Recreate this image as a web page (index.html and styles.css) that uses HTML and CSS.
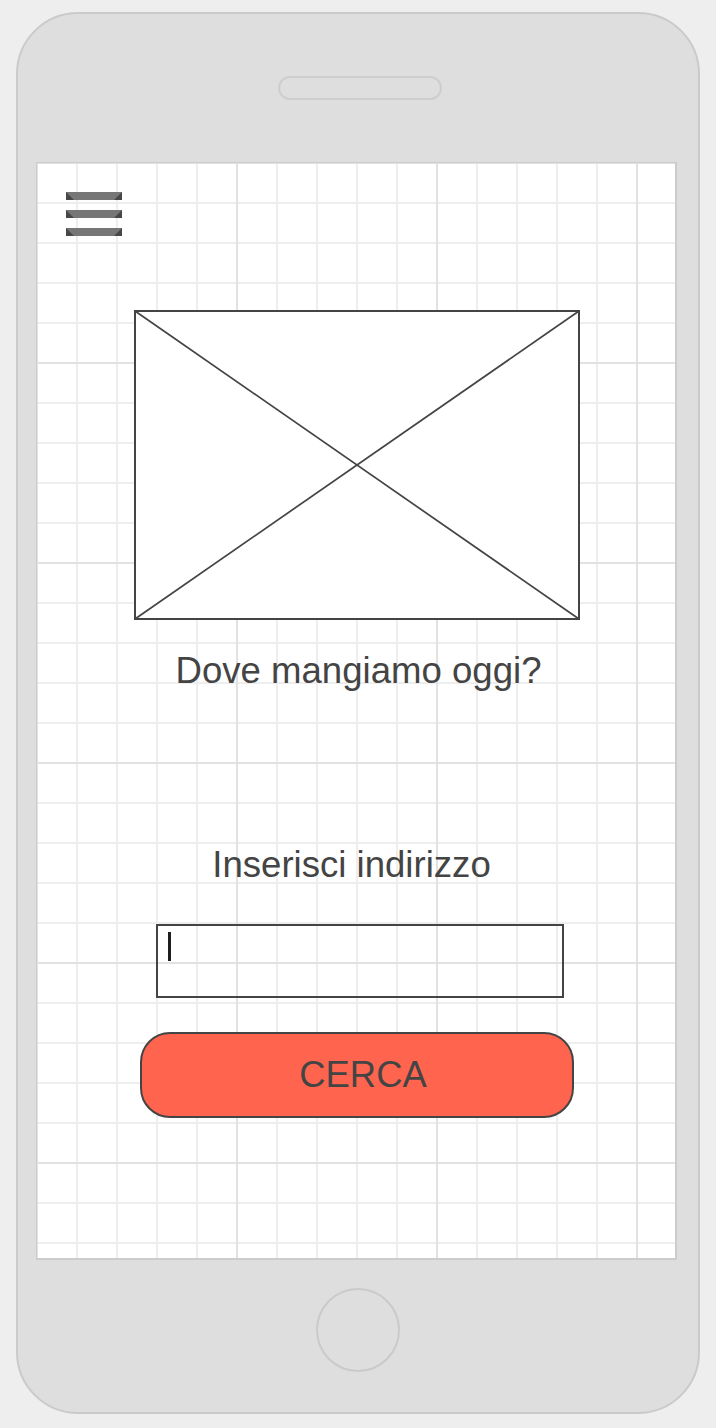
FILE: index.html
```html
<!DOCTYPE html>
<html lang="it">
<head>
<meta charset="utf-8">
<title>Dove mangiamo oggi?</title>
<link rel="stylesheet" href="styles.css">
</head>
<body>
<div class="phone">
  <div class="speaker"></div>
  <div class="screen">
    <svg class="menu" width="56" height="44" viewBox="0 0 56 44">
      <g>
        <rect x="0" y="0" width="56" height="8" fill="#767676"/>
        <polygon points="0,0 0,8 8,8" fill="#474747"/>
        <polygon points="56,0 56,8 48,8" fill="#474747"/>
      </g>
      <g transform="translate(0,18)">
        <rect x="0" y="0" width="56" height="8" fill="#767676"/>
        <polygon points="0,0 0,8 8,8" fill="#474747"/>
        <polygon points="56,0 56,8 48,8" fill="#474747"/>
      </g>
      <g transform="translate(0,36)">
        <rect x="0" y="0" width="56" height="8" fill="#767676"/>
        <polygon points="0,0 0,8 8,8" fill="#474747"/>
        <polygon points="56,0 56,8 48,8" fill="#474747"/>
      </g>
    </svg>
    <svg class="placeholder" width="446" height="310" viewBox="0 0 446 310">
      <rect x="1" y="1" width="444" height="308" fill="#ffffff" stroke="#444444" stroke-width="2"/>
      <line x1="1" y1="1" x2="445" y2="309" stroke="#444444" stroke-width="1.7"/>
      <line x1="1" y1="309" x2="445" y2="1" stroke="#444444" stroke-width="1.7"/>
    </svg>
    <div class="title">Dove mangiamo oggi?</div>
    <div class="label">Inserisci indirizzo</div>
    <div class="field"><span class="caret"></span></div>
    <div class="button">CERCA</div>
  </div>
  <div class="home"></div>
</div>
</body>
</html>
```

FILE: styles.css
```css
html, body {
  margin: 0;
  padding: 0;
  background: #eeeeee;
}

body {
  width: 716px;
  height: 1428px;
  overflow: hidden;
  font-family: "Liberation Sans", Arial, sans-serif;
}

.phone {
  box-sizing: border-box;
  margin: 12px 0 0 16px;
  width: 684px;
  height: 1402px;
  background: #dedede;
  border: 2px solid #cacaca;
  border-radius: 62px;
  padding-top: 62px;
}

.speaker {
  box-sizing: border-box;
  margin-left: 260px;
  width: 164px;
  height: 24px;
  border: 2px solid #cdcdcd;
  border-radius: 12px;
}

.screen {
  box-sizing: border-box;
  margin: 62px 0 0 18px;
  width: 641px;
  height: 1098px;
  border: 1px solid #cccccc;
  border-right-width: 2px;
  border-bottom-width: 2px;
  background-color: #ffffff;
  background-image:
    linear-gradient(to right, #e2e2e2 2px, transparent 2px),
    linear-gradient(to bottom, #e2e2e2 2px, transparent 2px),
    linear-gradient(to right, #eeeeee 2px, transparent 2px),
    linear-gradient(to bottom, #eeeeee 2px, transparent 2px);
  background-size: 200px 100%, 100% 200px, 40px 100%, 100% 40px;
  background-position: 199px 0, 0 199px, 39px 0, 0 39px;
  background-repeat: repeat;
  display: flex;
  flex-direction: column;
  align-items: flex-start;
}

.menu {
  display: block;
  margin: 29px 0 0 29px;
}

.placeholder {
  display: block;
  margin: 74px 0 0 97px;
}

.title {
  margin-top: 30px;
  width: 100%;
  padding-left: 5px;
  box-sizing: border-box;
  text-align: center;
  font-size: 36.6px;
  line-height: 42px;
  color: #444444;
}

.label {
  margin-top: 152px;
  width: 100%;
  padding-right: 9px;
  box-sizing: border-box;
  text-align: center;
  font-size: 36.6px;
  line-height: 42px;
  color: #444444;
}

.field {
  box-sizing: border-box;
  margin: 38px 0 0 119px;
  width: 408px;
  height: 74px;
  border: 2px solid #444444;
  padding: 6px 0 0 10px;
}

.caret {
  display: block;
  width: 2.5px;
  height: 29px;
  background: #1e1e1e;
}

.button {
  box-sizing: border-box;
  margin: 34px 0 0 103px;
  width: 434px;
  height: 86px;
  border: 2px solid #444444;
  border-radius: 30px;
  background: #ff644e;
  color: #444444;
  font-size: 36.4px;
  line-height: 82px;
  text-align: center;
  padding-left: 12px;
}

.home {
  box-sizing: border-box;
  margin: 28px 0 0 298px;
  width: 84px;
  height: 84px;
  border: 2px solid #cacaca;
  border-radius: 50%;
}
```
